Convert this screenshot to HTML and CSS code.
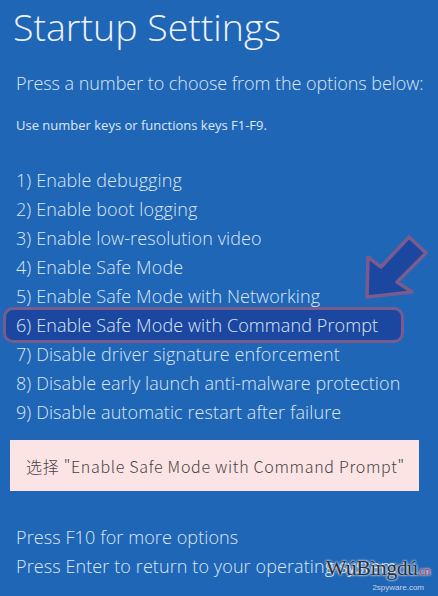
FILE: index.html
```html
<!DOCTYPE html>
<html lang="zh-CN">
<head>
    <meta charset="UTF-8">
    <meta name="viewport" content="width=device-width, initial-scale=1.0">
    <title>Startup Settings</title>
    <link rel="stylesheet" href="styles.css">
</head>
<body>
    <div class="screen">
        <h1 class="title">Startup Settings</h1>
        <p class="lead">Press a number to choose from the options below:</p>
        <p class="hint">Use number keys or functions keys F1-F9.</p>

        <ul class="options">
            <li>1) Enable debugging</li>
            <li>2) Enable boot logging</li>
            <li>3) Enable low-resolution video</li>
            <li>4) Enable Safe Mode</li>
            <li>5) Enable Safe Mode with Networking</li>
            <li class="picked">6) Enable Safe Mode with Command Prompt</li>
            <li>7) Disable driver signature enforcement</li>
            <li>8) Disable early launch anti-malware protection</li>
            <li>9) Disable automatic restart after failure</li>
        </ul>

        <div class="note">选择 "Enable Safe Mode with Command Prompt"</div>

        <ul class="footer">
            <li>Press F10 for more options</li>
            <li>Press Enter to return to your operating system</li>
        </ul>

        <!-- arrow pointing at option 6 -->
        <svg class="arrow" width="70" height="72" viewBox="362 232 70 72">
            <polygon points="367,297 368,257 381,267 409,237 426,253 397,282 412,292"
                     fill="#1c47a1" stroke="#7a5b8e" stroke-width="3.5" stroke-linejoin="round"/>
        </svg>

        <div class="mark">
            <span class="mark-name">WúBìngdú<small>.cn</small></span>
            <span class="mark-sub">2spyware.com</span>
        </div>
    </div>
</body>
</html>
```

FILE: styles.css
```css
body {
    margin: 0;
    padding: 0;
    background-color: #2066b6;
    font-family: "Open Sans", "Noto Sans", sans-serif;
    color: #dde7f4;
}

.screen {
    position: relative;
    width: 438px;
    height: 596px;
    overflow: hidden;
    padding-left: 16px;
    box-sizing: border-box;
}

.title {
    margin: 0;
    padding-top: 2px;
    margin-left: -3px;
    font-size: 37.5px;
    font-weight: 300;
    line-height: 50px;
    color: #eef3fa;
}

.lead {
    margin: 19px 0 0 0;
    font-size: 18px;
    font-weight: 300;
    line-height: 24px;
    letter-spacing: -0.05px;
}

.hint {
    margin: 22px 0 0 0;
    font-size: 13px;
    line-height: 16px;
}

ul {
    list-style: none;
    margin: 0;
    padding: 0;
}

.options {
    margin-top: 33px;
}

.options li,
.footer li {
    font-size: 18px;
    font-weight: 300;
    line-height: 29px;
    white-space: nowrap;
    letter-spacing: 0.1px;
}

.options .picked {
    box-sizing: border-box;
    width: 401px;
    margin: -4px 0 -3px -13px;
    padding: 1px 0 0 10px;
    border: 3px solid #7a5b8e;
    border-radius: 10px;
    background-color: #1c47a1;
}

.note {
    box-sizing: border-box;
    width: 409px;
    height: 51px;
    margin: 13px 0 0 -6px;
    padding-left: 16px;
    display: flex;
    align-items: center;
    background-color: #fde4e4;
    color: #444;
    font-family: "Noto Sans CJK SC", "Noto Sans", sans-serif;
    font-size: 16px;
    font-weight: 300;
    letter-spacing: 0.7px;
}

.footer {
    margin-top: 32px;
}

.arrow {
    position: absolute;
    left: 362px;
    top: 232px;
}

.mark {
    position: absolute;
    left: 318px;
    top: 556px;
    display: flex;
    flex-direction: column;
    align-items: flex-end;
    width: 112px;
}

.mark-name {
    font-family: "Liberation Serif", serif;
    font-size: 22px;
    line-height: 24px;
    color: #2a2f3a;
    text-shadow: 0 0 2px #fff, 0 0 3px #fff;
    letter-spacing: -0.6px;
}

.mark-name small {
    font-size: 12px;
    color: #c0343a;
}

.mark-sub {
    font-family: "Liberation Sans", sans-serif;
    font-size: 8px;
    line-height: 10px;
    color: #c8d3e6;
    margin-right: 6px;
}
```
